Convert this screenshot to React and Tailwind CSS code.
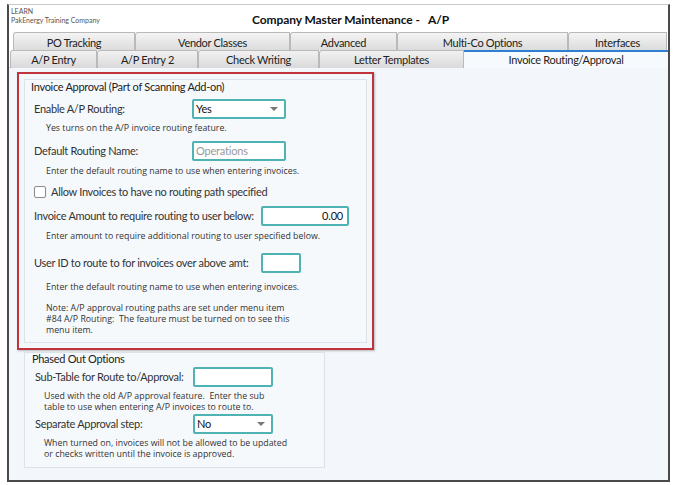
import React from 'react';

const backTabs = [
    { label: 'PO Tracking', w: 122 },
    { label: 'Vendor Classes', w: 155 },
    { label: 'Advanced', w: 107 },
    { label: 'Multi-Co Options', w: 171 },
    { label: 'Interfaces', w: 99 },
];

const frontTabs = [
    { label: 'A/P Entry', w: 87 },
    { label: 'A/P Entry 2', w: 101 },
    { label: 'Check Writing', w: 121 },
    { label: 'Letter Templates', w: 145 },
];

const Field = ({ w, children, className = '' }) => (
    <div className={`h-[20px] border-2 border-[#4fb3b3] bg-white rounded-[2px] flex items-center px-[2px] text-[11px] tracking-[-0.2px] ${className}`} style={{ width: w }}>
        {children}
    </div>
);

const Select = ({ w, value }) => (
    <Field w={w} className="justify-between text-[#111]">
        <span>{value}</span>
        <span className="mr-[4px] w-0 h-0 border-l-[4px] border-r-[4px] border-t-[4px] border-l-transparent border-r-transparent border-t-[#777]" />
    </Field>
);

const Hint = ({ children, className = '' }) => (
    <div className={`font-['Open_Sans',sans-serif] text-[8.8px] leading-[11px] text-[#333] whitespace-nowrap ${className}`}>{children}</div>
);

const Label = ({ w, children }) => (
    <div className="text-[11px] tracking-[-0.3px] text-[#333] whitespace-nowrap shrink-0" style={{ width: w }}>{children}</div>
);

export default function App() {
    return (
        <div className="w-[674px] h-[485px] bg-white overflow-hidden font-['Lato',sans-serif] text-[#222]">
            <div className="ml-[7px] mt-[4px] w-[663px] h-[478px] border-2 border-t border-[#4a4a4a] border-t-[#c8c8c8] bg-white flex flex-col">
                {/* header */}
                <div className="h-[27px] flex relative shrink-0">
                    <div className="pl-[2px] pt-[2px] text-[7px] leading-[9px] text-[#555]">
                        <div>LEARN</div>
                        <div>PakEnergy Training Company</div>
                    </div>
                    <div className="absolute left-[243px] top-[6px] text-[12px] font-bold tracking-[-0.1px] text-[#111]">
                        Company Master Maintenance -&nbsp;&nbsp; A/P
                    </div>
                </div>

                {/* tabs */}
                <div className="shrink-0 bg-white">
                    <div className="flex pl-[4px] h-[18px]">
                        {backTabs.map((t) => (
                            <div key={t.label} style={{ width: t.w }} className="h-[18px] shrink-0 border border-b-0 border-[#b9b9b9] rounded-tl-[3px] bg-gradient-to-b from-[#f4f4f4] to-[#dcdcdc] text-[11px] tracking-[-0.3px] leading-[19px] text-center text-[#222]">
                                {t.label}
                            </div>
                        ))}
                    </div>
                    <div className="flex pl-[1px] h-[18px] border-b border-[#c9d3dc]">
                        {frontTabs.map((t) => (
                            <div key={t.label} style={{ width: t.w }} className="h-[18px] shrink-0 border border-b-0 border-[#b9b9b9] rounded-tl-[3px] bg-gradient-to-b from-[#f2f2f2] to-[#d9d9d9] text-[11px] tracking-[-0.3px] leading-[17px] text-center text-[#222]">
                                {t.label}
                            </div>
                        ))}
                        <div className="flex-1 h-[18px] border-t-2 border-[#2f7fd0] bg-[#f7fafd] text-[11px] tracking-[-0.3px] leading-[15px] text-center text-[#222]">
                            Invoice Routing/Approval
                        </div>
                    </div>
                </div>

                {/* content */}
                <div className="flex-1 bg-[#f3f7fb] pl-[8px] pt-[4px]">
                    <div className="w-[357px] h-[278px] border-2 border-[#c0323c] shadow-[1px_1px_2px_rgba(0,0,0,0.25)] p-[5px]">
                        <div className="h-full border border-[#dbe3ea] bg-[#f6f9fc] pl-[6px]">
                            <div className="h-[14px] text-[11px] tracking-[-0.3px] leading-[14px] whitespace-nowrap">Invoice Approval (Part of Scanning Add-on)</div>

                            <div className="flex items-center mt-[5px] pl-[3px]">
                                <Label w={158}>Enable A/P Routing:</Label>
                                <Select w={94} value="Yes" />
                            </div>
                            <Hint className="pl-[15px] mt-[4px]">Yes turns on the A/P invoice routing feature.</Hint>

                            <div className="flex items-center mt-[7px] pl-[3px]">
                                <Label w={158}>Default Routing Name:</Label>
                                <Field w={94} className="text-[#999]">Operations</Field>
                            </div>
                            <Hint className="pl-[15px] mt-[5px]">Enter the default routing name to use when entering invoices.</Hint>

                            <div className="flex items-center h-[14px] mt-[8px] pl-[3px] gap-[5px]">
                                <div className="w-[12px] h-[12px] border border-[#8a8a8a] rounded-[2px] bg-white" />
                                <Label>Allow Invoices to have no routing path specified</Label>
                            </div>

                            <div className="flex items-center mt-[7px] pl-[3px]">
                                <Label w={227}>Invoice Amount to require routing to user below:</Label>
                                <Field w={88} className="justify-end pr-[4px] text-[#111]">0.00</Field>
                            </div>
                            <Hint className="pl-[15px] mt-[5px]">Enter amount to require additional routing to user specified below.</Hint>

                            <div className="flex items-center mt-[11px] pl-[3px]">
                                <Label w={227}>User ID to route to for invoices over above amt:</Label>
                                <Field w={40} />
                            </div>
                            <Hint className="pl-[15px] mt-[9px]">Enter the default routing name to use when entering invoices.</Hint>
                            <Hint className="pl-[15px] mt-[10px]">
                                Note: A/P approval routing paths are set under menu item<br />
                                #84 A/P Routing:&nbsp; The feature must be turned on to see this<br />
                                menu item.
                            </Hint>
                        </div>
                    </div>

                    <div className="ml-[7px] mt-[2px] w-[301px] h-[116px] border border-[#dbe3ea] bg-[#f6f9fc] pl-[10px]">
                        <div className="h-[12px] text-[11px] tracking-[-0.3px] leading-[12px] -ml-[3px] whitespace-nowrap">Phased Out Options</div>
                        <div className="flex items-center mt-[2px]">
                            <Label w={158}>Sub-Table for Route to/Approval:</Label>
                            <Field w={80} />
                        </div>
                        <Hint className="pl-[9px] mt-[4px]">
                            Used with the old A/P approval feature.&nbsp; Enter the sub<br />
                            table to use when entering A/P invoices to route to.
                        </Hint>
                        <div className="flex items-center mt-[1px]">
                            <Label w={158}>Separate Approval step:</Label>
                            <Select w={80} value="No" />
                        </div>
                        <Hint className="pl-[9px] mt-[4px]">
                            When turned on, invoices will not be allowed to be updated<br />
                            or checks written until the invoice is approved.
                        </Hint>
                    </div>
                </div>
            </div>
        </div>
    );
}
